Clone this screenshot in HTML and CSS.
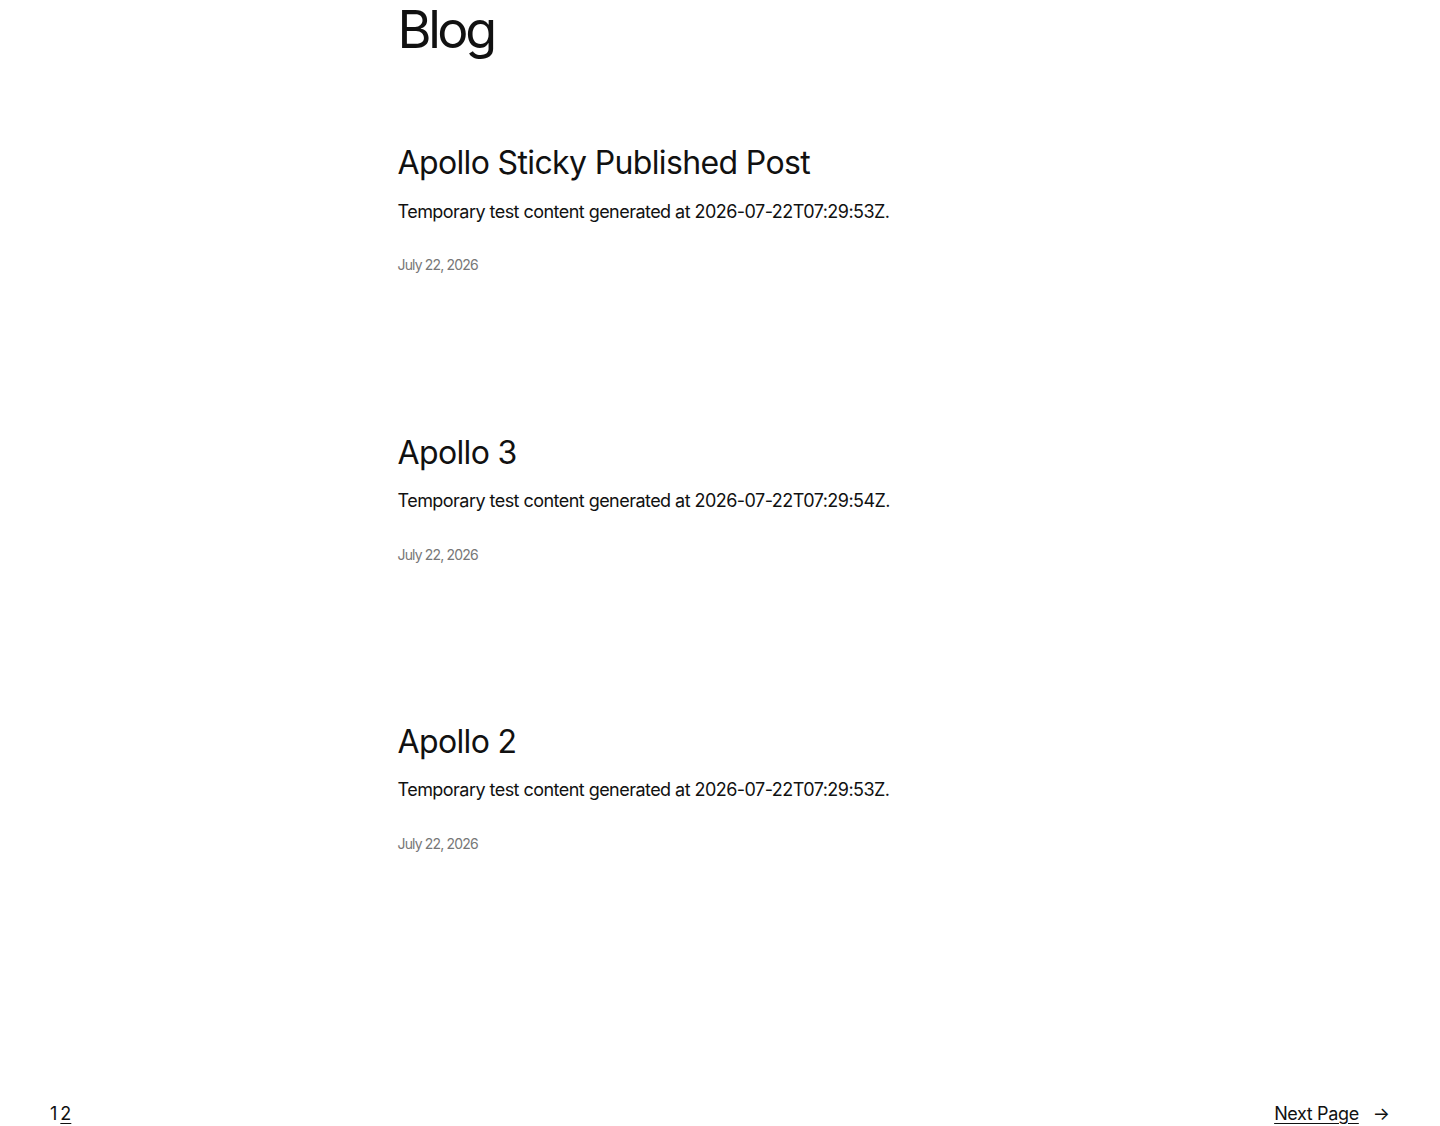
FILE: index.html
```html
<!DOCTYPE html>
<html lang="en">
<head>
<meta charset="utf-8">
<title>Blog</title>
<link rel="stylesheet" href="styles.css">
</head>
<body>
<main class="page">
  <div class="content">
    <h1 class="page-title">Blog</h1>
    <ul class="posts">
      <li class="post">
        <h2 class="post-title">Apollo Sticky Published Post</h2>
        <p class="post-excerpt">Temporary test content generated at 2026-07-22T07:29:53Z.</p>
        <div class="post-date">July 22, 2026</div>
      </li>
      <li class="post">
        <h2 class="post-title">Apollo 3</h2>
        <p class="post-excerpt">Temporary test content generated at 2026-07-22T07:29:54Z.</p>
        <div class="post-date">July 22, 2026</div>
      </li>
      <li class="post">
        <h2 class="post-title">Apollo 2</h2>
        <p class="post-excerpt">Temporary test content generated at 2026-07-22T07:29:53Z.</p>
        <div class="post-date">July 22, 2026</div>
      </li>
    </ul>
  </div>
  <nav class="pagination">
    <div class="pages">
      <span class="current">1</span>
      <a class="page-link" href="#">2</a>
    </div>
    <a class="next" href="#"><span class="next-label">Next Page</span><span class="arrow">→</span></a>
  </nav>
</main>
</body>
</html>
```

FILE: styles.css
```css
html, body {
  margin: 0;
  padding: 0;
  background: #ffffff;
}
body {
  font-family: Inter, "Noto Sans", sans-serif;
  color: #111111;
}
.page {
  display: flex;
  flex-direction: column;
}
.content {
  width: 645px;
  margin: 0 auto;
}
.page-title {
  margin: 0;
  font-size: 52px;
  line-height: 1.14;
  font-weight: 400;
  letter-spacing: -0.065em;
}
.posts {
  list-style: none;
  margin: 85px 0 0 0;
  padding: 0;
  display: flex;
  flex-direction: column;
  gap: 158.5px;
}
.post {
  display: flex;
  flex-direction: column;
}
.post-title {
  margin: 0;
  font-size: 32px;
  line-height: 1.2;
  font-weight: 400;
  letter-spacing: -0.02em;
}
.post-excerpt {
  margin: 15px 0 0 0;
  font-size: 18px;
  line-height: 1.6;
  font-weight: 400;
  letter-spacing: -0.03em;
}
.post-date {
  margin-top: 29px;
  font-size: 14px;
  line-height: 1.4;
  color: #777777;
  letter-spacing: -0.06em;
}
.pagination {
  margin-top: 246px;
  padding: 0 50px 0 50px;
  display: flex;
  justify-content: space-between;
  align-items: baseline;
  font-size: 18px;
  line-height: 1.6;
}
.pages {
  display: flex;
  gap: 3px;
}
.page-link, .next {
  color: #111111;
}
.next {
  text-decoration: none;
  display: flex;
  gap: 14px;
  align-items: baseline;
}
.next-label {
  text-decoration: underline;
  text-underline-offset: 3px;
  letter-spacing: -0.02em;
}
.page-link {
  text-underline-offset: 3px;
}
```
